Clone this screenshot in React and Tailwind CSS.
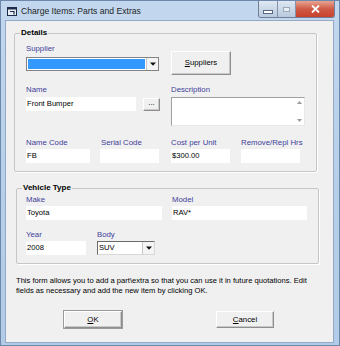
import React from 'react';

const font = { fontFamily: '"Liberation Sans", Arial, sans-serif' };

function Label({ children, className = '' }) {
    return <div className={`h-[10px] text-[7.8px] leading-[10px] text-[#41419a] whitespace-nowrap ${className}`}>{children}</div>;
}

function Field({ value, className = '' }) {
    return (
        <div className={`h-[14px] bg-white text-[7.6px] leading-[14px] text-black pl-[1px] whitespace-nowrap ${className}`}>{value}</div>
    );
}

function DropArrow() {
    return (
        <div className="h-full w-[12px] flex items-center justify-center bg-[#f4f4f4] border-l border-[#c8c8c8]">
            <svg width="6" height="4" viewBox="0 0 6 4"><path d="M0 0.5h6L3 3.8z" fill="#111" /></svg>
        </div>
    );
}

function Btn({ children, className = '' }) {
    return (
        <div className={`flex items-center justify-center bg-[#f0f0f0] border border-t-white border-l-white border-r-[#8e8e8e] border-b-[#8e8e8e] shadow-[inset_-1px_-1px_0_#c9c9c9] text-[7.8px] text-black ${className}`}>
            {children}
        </div>
    );
}

function Group({ title, className = '', innerClass = '', children }) {
    return (
        <fieldset className={`border border-[#c6c6c6] rounded-[2px] shadow-[1px_1px_0_#ffffff] p-0 m-0 ${className}`}>
            <legend className="ml-[5px] px-[1px] text-[8px] leading-[10px] font-bold text-black">{title}</legend>
            <div className={innerClass}>{children}</div>
        </fieldset>
    );
}

export default function App() {
    return (
        <div style={font} className="w-[340px] h-[346px] flex flex-col bg-gradient-to-b from-[#c3d8ee] via-[#b7cfe9] to-[#b2cbe6] border border-[#6d88aa] overflow-hidden">
            {/* title bar */}
            <div className="h-[19px] flex shrink-0">
                <div className="flex items-center self-center ml-[6px] mt-[2px]">
                    <svg width="10" height="9" viewBox="0 0 10 9">
                        <rect x="0.5" y="0.5" width="9" height="8" fill="#e9eef5" stroke="#1c2c4a" />
                        <rect x="0.5" y="0.5" width="9" height="2" fill="#1c2c4a" />
                        <path d="M3 4.5h4v3" fill="none" stroke="#1c2c4a" strokeWidth="1.2" />
                    </svg>
                    <span className="ml-[4px] text-[8.6px] text-[#1e1e1e]">Charge Items: Parts and Extras</span>
                </div>
                <div className="ml-auto mr-[4px] flex self-start h-[17px] rounded-b-[3px] border border-t-0 border-[#6f7f98] overflow-hidden">
                    <div className="w-[19px] flex items-center justify-center bg-gradient-to-b from-[#dfe8f3] to-[#b9c9dd] border-r border-[#8393ab]">
                        <div className="w-[8px] h-[2px] mt-[5px] bg-white border border-[#55667e] box-content" />
                    </div>
                    <div className="w-[18px] flex items-center justify-center bg-gradient-to-b from-[#dfe8f3] to-[#b9c9dd] border-r border-[#8393ab]">
                        <div className="w-[7px] h-[5px] border border-[#9aa8bc] bg-[#e8eef6]" />
                    </div>
                    <div className="w-[38px] flex items-center justify-center bg-gradient-to-b from-[#e7a492] via-[#cf5a46] to-[#c8412d]">
                        <svg width="9" height="8" viewBox="0 0 9 8"><path d="M1 0.5l7 7M8 0.5l-7 7" stroke="#fff" strokeWidth="1.8" /></svg>
                    </div>
                </div>
            </div>
            {/* client area */}
            <div className="ml-[5px] mr-[6px] mt-[1px] h-[321px] bg-[#f0f0f0] shadow-[0_0_0_1px_#93a9c6] flex flex-col items-start">
                <Group title="Details" className="mt-[7px] ml-[8px] w-[303px]" innerClass="pl-[11px] pt-[6px] pb-[8px]">
                    <div className="flex">
                        <div className="w-[145px]">
                            <Label>Supplier</Label>
                            <div className="mt-[3px] w-[133px] h-[14px] flex border border-[#828282] bg-white">
                                <div className="flex-1 m-[1px] bg-[#3399ff]" />
                                <DropArrow />
                            </div>
                        </div>
                        <Btn className="mt-[7px] w-[60px] h-[24px]"><span><span className="underline">S</span>uppliers</span></Btn>
                    </div>
                    <div className="flex mt-[10px]">
                        <div className="w-[145px]">
                            <Label>Name</Label>
                            <div className="flex mt-[2px]">
                                <Field value="Front Bumper" className="w-[110px]" />
                                <Btn className="ml-[7px] mt-[1px] w-[17px] h-[13px] leading-none"><span className="-mt-[3px]">...</span></Btn>
                            </div>
                        </div>
                        <div>
                            <Label>Description</Label>
                            <div className="mt-[2px] w-[134px] h-[29px] bg-white border border-t-[#a0a0a0] border-l-[#a0a0a0] border-r-[#e8e8e8] border-b-[#e8e8e8] flex justify-end">
                                <div className="w-[10px] flex flex-col items-center justify-between py-[3px]">
                                    <svg width="5" height="3" viewBox="0 0 5 3"><path d="M0 3L2.5 0L5 3z" fill="#9a9a9a" /></svg>
                                    <svg width="5" height="3" viewBox="0 0 5 3"><path d="M0 0L2.5 3L5 0z" fill="#9a9a9a" /></svg>
                                </div>
                            </div>
                        </div>
                    </div>
                    <div className="flex mt-[12px]">
                        <div className="w-[74px]">
                            <Label>Name Code</Label>
                            <Field value="FB" className="mt-[1px] w-[64px]" />
                        </div>
                        <div className="w-[71px]">
                            <Label className="pl-[1px]">Serial Code</Label>
                            <Field value="" className="mt-[1px] w-[59px]" />
                        </div>
                        <div className="w-[70px]">
                            <Label>Cost per Unit</Label>
                            <Field value="$300.00" className="mt-[1px] w-[59px]" />
                        </div>
                        <div>
                            <Label>Remove/Repl Hrs</Label>
                            <Field value="" className="mt-[1px] w-[59px]" />
                        </div>
                    </div>
                </Group>

                <Group title="Vehicle Type" className="mt-[11px] ml-[10px] w-[303px]" innerClass="pl-[9px] pt-[2px] pb-[8px]">
                    <div className="flex">
                        <div className="w-[146px]">
                            <Label>Make</Label>
                            <Field value="Toyota" className="mt-[1px] w-[136px]" />
                        </div>
                        <div>
                            <Label>Model</Label>
                            <Field value="RAV*" className="mt-[1px] w-[135px]" />
                        </div>
                    </div>
                    <div className="flex mt-[10px]">
                        <div className="w-[71px]">
                            <Label>Year</Label>
                            <Field value="2008" className="mt-[1px] w-[60px]" />
                        </div>
                        <div>
                            <Label>Body</Label>
                            <div className="mt-[1px] w-[58px] h-[14px] flex border border-t-[#6a6a6a] border-l-[#6a6a6a] border-r-[#d8d8d8] border-b-[#d8d8d8] bg-white">
                                <div className="flex-1 text-[7.6px] leading-[12px] pl-[1px]">SUV</div>
                                <DropArrow />
                            </div>
                        </div>
                    </div>
                </Group>

                <p className="mt-[12px] ml-[10px] text-[7.6px] leading-[10px] text-black whitespace-nowrap">
                    This form allows you to add a part\extra so that you can use it in future quotations. Edit<br />
                    fields as necessary and add the new item by clicking OK.
                </p>

                <div className="flex mt-[15px]">
                    <Btn className="ml-[58px] w-[58px] h-[17px] outline outline-1 outline-[#9a9a9a]"><span><span className="underline">O</span>K</span></Btn>
                    <Btn className="ml-[94px] w-[58px] h-[17px]"><span><span className="underline">C</span>ancel</span></Btn>
                </div>
            </div>
        </div>
    );
}
